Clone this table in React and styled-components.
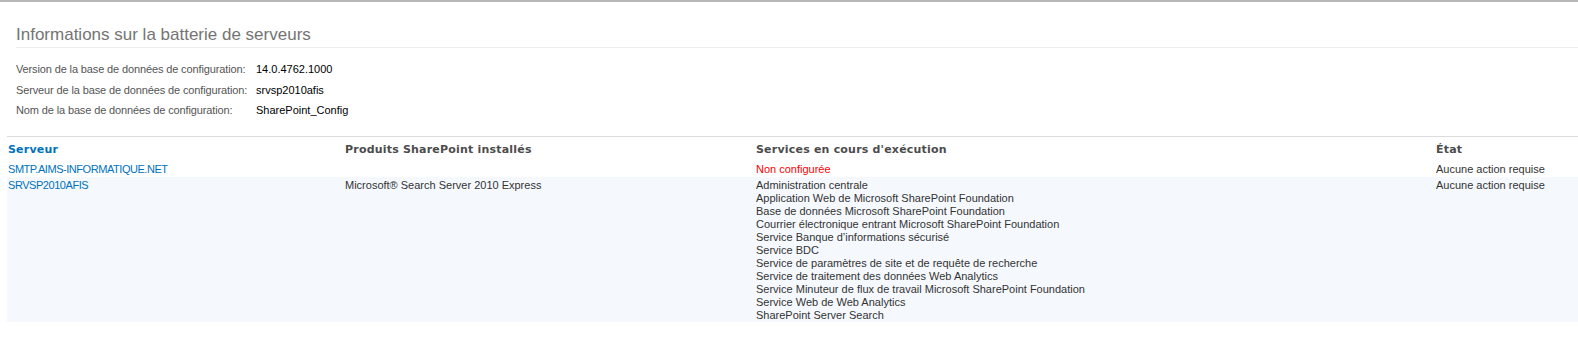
import React from "react";
import styled, { createGlobalStyle } from "styled-components";

const Global = createGlobalStyle`
  html, body { margin: 0; padding: 0; background: #fff; }
  body { font-family: "Liberation Sans", Arial, sans-serif; }
`;

const Page = styled.div`
  border-top: 2px solid #b8b8b8;
  padding-bottom: 20px;
`;

const Section = styled.section`
  padding: 23px 0 0 16px;
`;

const Title = styled.h2`
  margin: 0;
  font-weight: normal;
  font-size: 17px;
  line-height: 20px;
  color: #747474;
  padding-bottom: 2px;
  border-bottom: 1px solid #ededed;
`;

const InfoTable = styled.div`
  display: grid;
  grid-template-columns: 240px auto;
  grid-auto-rows: 20.5px;
  padding: 11px 0 15px;
  font-size: 11px;
  align-items: center;
`;

const Label = styled.div`
  color: #555;
  letter-spacing: -0.13px;
`;

const Value = styled.div`
  color: #000;
`;

const Farm = styled.div`
  margin-left: 7px;
  border-top: 1px solid #dcdcdc;
`;

const Grid = styled.div`
  display: grid;
  grid-template-columns: 337px 411px 680px 1fr;
`;

const Head = styled.div`
  font-family: "DejaVu Sans", Verdana, sans-serif;
  font-weight: bold;
  font-size: 11px;
  color: ${(p) => (p.$link ? "#0072bc" : "#4c4c4c")};
  padding: 6px 0 0 1px;
  height: 19px;
  letter-spacing: 0.2px;
`;

const Row = styled.div`
  display: contents;
`;

const Cell = styled.div`
  font-size: 11px;
  line-height: 13px;
  color: ${(p) => p.$color || "#333"};
  letter-spacing: ${(p) => (p.$caps ? "-0.45px" : "normal")};
  background: ${(p) => (p.$alt ? "#f5f9fe" : "transparent")};
  padding: ${(p) => (p.$alt ? "2px 0 0 1px" : "1px 0 1px 1px")};
`;

const List = styled.div`
  display: flex;
  flex-direction: column;
`;

const services = [
  "Administration centrale",
  "Application Web de Microsoft SharePoint Foundation",
  "Base de données Microsoft SharePoint Foundation",
  "Courrier électronique entrant Microsoft SharePoint Foundation",
  "Service Banque d’informations sécurisé",
  "Service BDC",
  "Service de paramètres de site et de requête de recherche",
  "Service de traitement des données Web Analytics",
  "Service Minuteur de flux de travail Microsoft SharePoint Foundation",
  "Service Web de Web Analytics",
  "SharePoint Server Search",
];

export default function App() {
  return (
    <>
      <Global />
      <Page>
        <Section>
          <Title>Informations sur la batterie de serveurs</Title>
          <InfoTable>
            <Label>Version de la base de données de configuration:</Label>
            <Value>14.0.4762.1000</Value>
            <Label>Serveur de la base de données de configuration:</Label>
            <Value>srvsp2010afis</Value>
            <Label>Nom de la base de données de configuration:</Label>
            <Value>SharePoint_Config</Value>
          </InfoTable>
        </Section>
        <Farm>
          <Grid>
            <Head $link>Serveur</Head>
            <Head>Produits SharePoint installés</Head>
            <Head>Services en cours d'exécution</Head>
            <Head>État</Head>
            <Row>
              <Cell $caps $color="#0072bc">SMTP.AIMS-INFORMATIQUE.NET</Cell>
              <Cell />
              <Cell $color="#ff0000">Non configurée</Cell>
              <Cell>Aucune action requise</Cell>
            </Row>
            <Row>
              <Cell $alt $caps $color="#0072bc">SRVSP2010AFIS</Cell>
              <Cell $alt>Microsoft® Search Server 2010 Express</Cell>
              <Cell $alt>
                <List>
                  {services.map((s) => (
                    <span key={s}>{s}</span>
                  ))}
                </List>
              </Cell>
              <Cell $alt>Aucune action requise</Cell>
            </Row>
          </Grid>
        </Farm>
      </Page>
    </>
  );
}
